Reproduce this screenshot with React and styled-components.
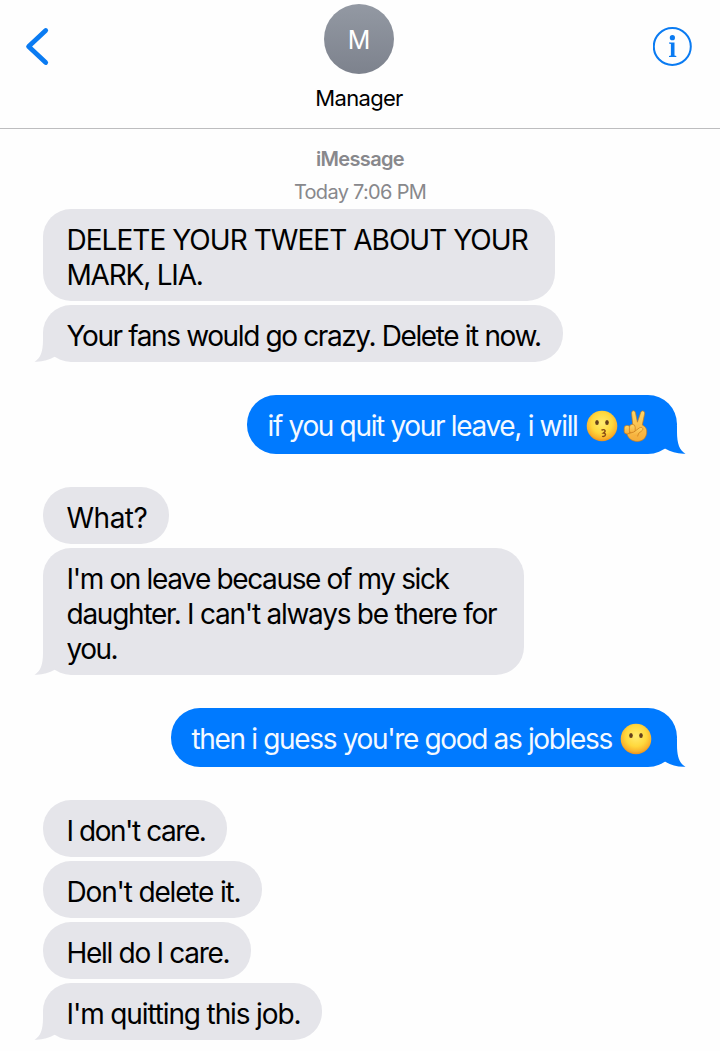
import React from "react";
import styled, { createGlobalStyle } from "styled-components";

const GlobalStyle = createGlobalStyle`
  * { box-sizing: border-box; }
  body {
    margin: 0;
    background: #fefefe;
    font-family: Inter, "Liberation Sans", sans-serif;
    -webkit-font-smoothing: antialiased;
  }
`;

const Screen = styled.main`
  display: flex;
  flex-direction: column;
  width: 720px;
  height: 1051px;
  overflow: hidden;
`;

const Header = styled.header`
  display: flex;
  justify-content: space-between;
  align-items: flex-start;
  height: 129px;
  padding: 4px 27px 0 25px;
  border-bottom: 1px solid #bdbdbf;
`;

const IconButton = styled.button`
  display: flex;
  width: 40px;
  margin-top: 22px;
  padding: 0;
  border: 0;
  background: none;
  color: #0a7bf2;
`;

const Contact = styled.div`
  display: flex;
  flex-direction: column;
  align-items: center;
  gap: 11px;
`;

const Avatar = styled.div`
  display: flex;
  align-items: center;
  justify-content: center;
  width: 70px;
  height: 70px;
  padding-top: 2px;
  border-radius: 50%;
  background: linear-gradient(#9399a3, #7d828d);
  color: #fff;
  font-size: 25px;
`;

const ContactName = styled.span`
  color: #000;
  font-size: 22px;
  line-height: 27px;
  letter-spacing: ${(p) => p.$spacing}px;
`;

const Stamp = styled.div`
  display: flex;
  flex-direction: column;
  align-items: center;
  height: 80px;
  padding-top: 14px;
  color: #88888c;
  font-size: 20px;
  line-height: 33px;
`;

const StampLine = styled.span`
  font-weight: ${(p) => (p.$strong ? 600 : 400)};
  letter-spacing: ${(p) => p.$spacing}px;
  white-space: nowrap;
`;

const Thread = styled.div`
  display: flex;
  flex-direction: column;
  gap: 33px;
  padding: 0 43px;
`;

const Group = styled.section`
  display: flex;
  flex-direction: column;
  align-items: ${(p) => (p.$mine ? "flex-end" : "flex-start")};
  gap: 4px;
`;

const Bubble = styled.div`
  position: relative;
  width: ${(p) => p.$width}px;
  padding: ${(p) => (p.$mine ? "14px 0 10px 20.5px" : "14px 0 8px 23.5px")};
  border-radius: ${(p) => (p.$mine ? 29 : 28)}px;
  background: ${(p) => (p.$mine ? "#007aff" : "#e5e5ea")};
  color: ${(p) => (p.$mine ? "#f4f9ff" : "#000")};
  font-size: 28px;
  line-height: 35px;
`;

const Line = styled.div`
  position: relative;
  display: flex;
  height: 35px;
  white-space: nowrap;
  letter-spacing: ${(p) => p.$spacing}px;
`;

const Tail = styled.svg`
  position: absolute;
  bottom: 0;
  ${(p) => (p.$mine ? "right: -9px; transform: scaleX(-1);" : "left: -9px;")}
  width: 30px;
  height: 28px;
  fill: ${(p) => (p.$mine ? "#007aff" : "#e5e5ea")};
`;

const Emojis = styled.span`
  display: flex;
  gap: 5px;
  margin-left: ${(p) => p.$gap}px;
`;

function BubbleTail({ mine }) {
  return (
    <Tail $mine={mine} viewBox="0 0 30 28">
      <path d="M9 0 V6 C9 17.5 6.5 24.5 0.5 27.7 C8 28.2 15 26 20.6 22.8 L30 20 V0Z" />
    </Tail>
  );
}

function Face({ kind }) {
  return (
    <svg width="32" height="35" viewBox="0 0 32 35">
      <defs>
        <radialGradient id={"skin-" + kind} cx=".5" cy=".4" r=".62">
          <stop offset="0" stopColor="#ffec70" />
          <stop offset=".55" stopColor="#ffd83d" />
          <stop offset=".82" stopColor="#fab32c" />
          <stop offset="1" stopColor="#e88717" />
        </radialGradient>
      </defs>
      <circle cx="16" cy="17" r="15.3" fill={`url(#skin-${kind})`} />
      <ellipse cx="11" cy="13.5" rx="1.8" ry="2.5" fill="#65401b" />
      <ellipse cx="21" cy="13.5" rx="1.8" ry="2.5" fill="#65401b" />
      {kind === "kiss" && (
        <path
          d="M16 21 C18.8 19.8 20.6 21.9 17.4 24 C20.6 24.3 20 27.7 16.6 27.4"
          fill="none"
          stroke="#8a4c16"
          strokeWidth="1.4"
          strokeLinecap="round"
        />
      )}
    </svg>
  );
}

function VictoryHand() {
  return (
    <svg width="26" height="35" viewBox="0 0 26 35">
      <defs>
        <linearGradient id="hand" x1="0" y1="0" x2="0" y2="1">
          <stop offset="0" stopColor="#ffd767" />
          <stop offset="1" stopColor="#f5ac38" />
        </linearGradient>
      </defs>
      <g fill="url(#hand)" stroke="#c97a1a" strokeWidth=".7" strokeLinejoin="round">
        <path d="M9.8 17 L8.6 4.3 C8.4 1.1 12 .9 12.5 3.9 L14.4 13.2 L17.7 3.5 C18.7 .8 22.2 1.8 21.6 4.8 L19.3 16 C23 18 24.2 20.5 23.6 24.5 C22.8 29.5 19 32.6 14 32.4 C9 32.2 5.4 29.5 4.2 25.5 L2 20 Z" />
        <rect x="1.2" y="16.4" width="5.8" height="8.6" rx="2.7" />
        <rect x="6.4" y="15.4" width="5.8" height="9" rx="2.8" />
        <path d="M6 25 C8 23.2 10 24 12 22.2 L16.5 18.8 C19.5 17.4 21 20.2 18.8 21.8 L15.6 24.4 L14.6 27.4" />
      </g>
    </svg>
  );
}

const EMOJI = {
  kiss: <Face kind="kiss" />,
  blank: <Face kind="blank" />,
  victory: <VictoryHand />,
};

const GROUPS = [
  {
    messages: [
      { width: 512, lines: [["DELETE YOUR TWEET ABOUT YOUR", -0.96], ["MARK, LIA.", -1.2]] },
      { width: 520, lines: [["Your fans would go crazy. Delete it now.", -1.38]] },
    ],
  },
  {
    mine: true,
    messages: [
      { width: 430, lines: [["if you quit your leave, i will", -1.33]], emojis: ["kiss", "victory"], gap: 8.5 },
    ],
  },
  {
    messages: [
      { width: 126, lines: [["What?", -0.5]] },
      {
        width: 481,
        lines: [
          ["I'm on leave because of my sick", -1.36],
          ["daughter. I can't always be there for", -1.25],
          ["you.", -1.5],
        ],
      },
    ],
  },
  {
    mine: true,
    messages: [
      { width: 506, lines: [["then i guess you're good as jobless", -1.34]], emojis: ["blank"], gap: 8 },
    ],
  },
  {
    messages: [
      { width: 184, lines: [["I don't care.", -1.45]] },
      { width: 219, lines: [["Don't delete it.", -1.17]] },
      { width: 208, lines: [["Hell do I care.", -1.3]] },
      { width: 279, lines: [["I'm quitting this job.", -1.13]] },
    ],
  },
];

function Message({ message, mine, last }) {
  return (
    <Bubble $mine={mine} $width={message.width}>
      {last && <BubbleTail mine={mine} />}
      {message.lines.map(([text, spacing]) => (
        <Line key={text} $spacing={spacing}>
          <span>{text}</span>
          {message.emojis && (
            <Emojis $gap={message.gap}>
              {message.emojis.map((name) => (
                <React.Fragment key={name}>{EMOJI[name]}</React.Fragment>
              ))}
            </Emojis>
          )}
        </Line>
      ))}
    </Bubble>
  );
}

export default function App() {
  return (
    <Screen>
      <GlobalStyle />
      <Header>
        <IconButton aria-label="Back">
          <svg width="28" height="42" viewBox="0 0 28 42">
            <path
              d="M20.7 4.5 L3.6 20.5 L20.7 36.5"
              fill="none"
              stroke="currentColor"
              strokeWidth="4.8"
              strokeLinecap="round"
              strokeLinejoin="round"
            />
          </svg>
        </IconButton>
        <Contact>
          <Avatar>M</Avatar>
          <ContactName $spacing={-0.7}>Manager</ContactName>
        </Contact>
        <IconButton aria-label="Details">
          <svg width="40" height="41" viewBox="0 0 40 41" fill="currentColor">
            <circle cx="19.3" cy="20.5" r="18.5" fill="none" stroke="currentColor" strokeWidth="2" />
            <circle cx="19.4" cy="11.7" r="2.6" />
            <path d="M16 16.6 H21.5 V29.4 L23.3 30 V31 H16 V30 L17.9 29.4 V18 L16 17.6Z" />
          </svg>
        </IconButton>
      </Header>
      <Stamp>
        <StampLine $strong $spacing={-0.65}>iMessage</StampLine>
        <StampLine $spacing={-0.7}>Today 7:06 PM</StampLine>
      </Stamp>
      <Thread>
        {GROUPS.map((group, i) => (
          <Group key={i} $mine={group.mine}>
            {group.messages.map((message, j) => (
              <Message
                key={j}
                message={message}
                mine={group.mine}
                last={j === group.messages.length - 1}
              />
            ))}
          </Group>
        ))}
      </Thread>
    </Screen>
  );
}
